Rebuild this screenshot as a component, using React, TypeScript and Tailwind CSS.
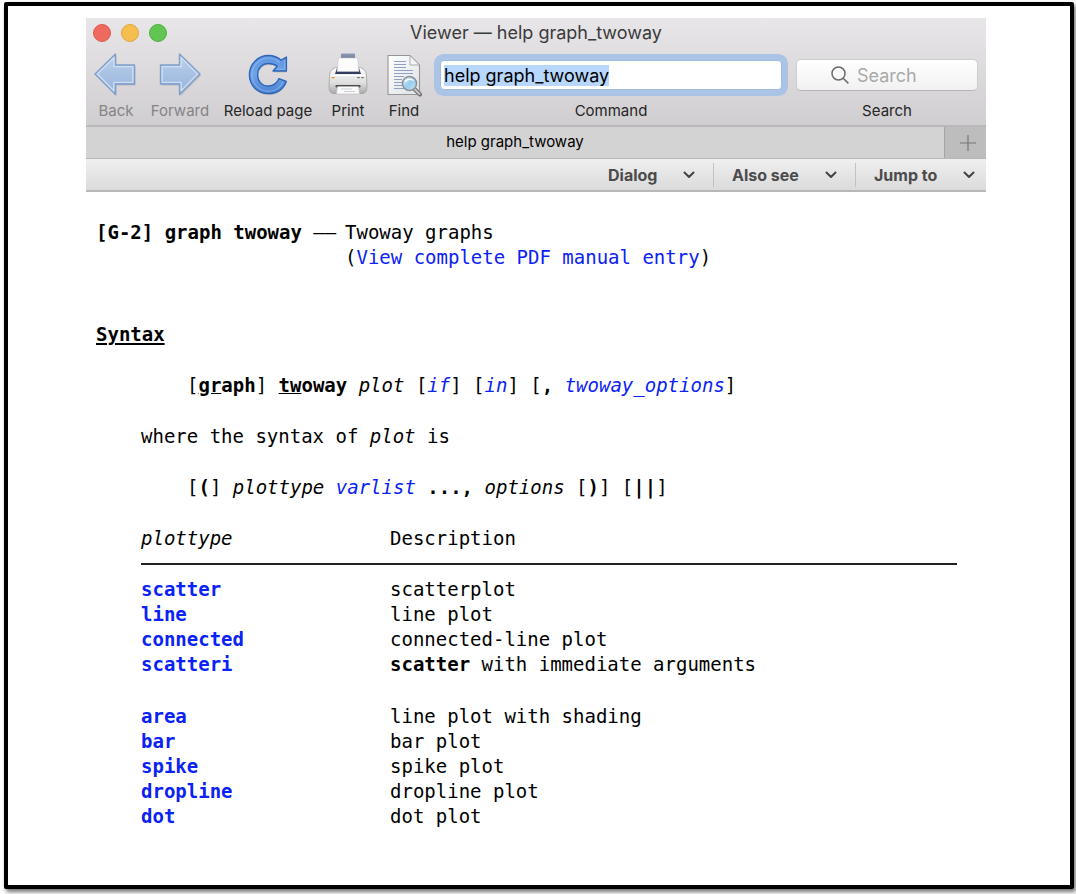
import { useEffect, useRef, type ReactNode } from "react";

function ArrowIcon({ forward = false }: { forward?: boolean }) {
  const d = forward
    ? "M1.5 12.5H20.5V1.5L41 21.5L20.5 42V31.5H1.5Z"
    : "M42.5 12.5H23.5V1.5L3 21.5L23.5 42V31.5H42.5Z";
  const inner = forward
    ? "M3.2 14.2H22.2V5.2L38.6 21.5L22.2 38.2V29.8H3.2Z"
    : "M40.8 14.2H21.8V5.2L5.4 21.5L21.8 38.2V29.8H40.8Z";
  const id = forward ? "arrow-forward" : "arrow-back";
  return (
    <svg width="44" height="44" viewBox="0 0 44 44" aria-hidden="true">
      <defs>
        <linearGradient id={id} x1="0" y1="0" x2="0" y2="1">
          <stop offset="0" stopColor="#bdd1ea" />
          <stop offset="1" stopColor="#95b3dc" />
        </linearGradient>
      </defs>
      <g transform={forward ? "translate(1 -0.5)" : "translate(-2 -0.5)"}>
        <path d={d} transform="translate(1 1.5)" fill="#00000022" />
        <path d={d} fill={`url(#${id})`} stroke="#7f9fcd" strokeWidth="1.4" strokeLinejoin="round" />
        <path d={inner} fill="none" stroke="#cfdef1" strokeWidth="1.3" strokeLinejoin="round" />
      </g>
    </svg>
  );
}

function ReloadIcon() {
  const d =
    "M33.2 7.2L38.4 4V18H25L29.2 13.2C26.8 11.2 23.7 10.5 20.5 10.5C14 10.5 9.6 15.2 9.6 21.8C9.6 28.4 14 33 20.5 33C25.3 33 29 30.4 31 25.6L38.3 28.4C35.2 36.2 28.5 40.6 20.5 40.6C9.6 40.6 1.4 32.4 1.4 21.8C1.4 11.2 9.8 2.5 20.5 2.5C25.5 2.5 29.8 4.2 33.2 7.2Z";
  return (
    <svg width="40" height="44" viewBox="0 0 40 44" aria-hidden="true">
      <defs>
        <linearGradient id="reload" x1="0" y1="0" x2="0" y2="1">
          <stop offset="0" stopColor="#5f96df" />
          <stop offset="0.5" stopColor="#6ea3e6" />
          <stop offset="1" stopColor="#4a82d2" />
        </linearGradient>
      </defs>
      <path d={d} transform="translate(0.5 1.4)" fill="#00000022" />
      <path d={d} fill="url(#reload)" stroke="#2f66ba" strokeWidth="1.4" strokeLinejoin="round" />
      <path
        d="M31.5 9.5C28.5 6.5 25 5 20.5 5C11.8 5 4 12.4 4 21.8C4 31.2 11.8 38.2 20.5 38.2C27 38.2 32 35 35 29.5M36.8 7V16.3H28.5"
        fill="none"
        stroke="#9cc2f2"
        strokeWidth="1.1"
        opacity="0.6"
      />
    </svg>
  );
}

function PrinterIcon() {
  return (
    <svg width="40" height="44" viewBox="0 0 40 44" aria-hidden="true">
      <defs>
        <linearGradient id="printer" x1="0" y1="0" x2="0" y2="1">
          <stop offset="0" stopColor="#fdfdfd" />
          <stop offset="0.6" stopColor="#dedede" />
          <stop offset="1" stopColor="#a9a9a9" />
        </linearGradient>
        <linearGradient id="feed" x1="0" y1="0" x2="0" y2="1">
          <stop offset="0" stopColor="#8f9bb6" />
          <stop offset="1" stopColor="#6c7693" />
        </linearGradient>
      </defs>
      <path d="M13 0.5H27V7H13Z" fill="url(#feed)" />
      <path d="M5 16C3 17 2 19 1.6 22L1 33C1 38 2.5 40.5 6 40.5H34C37.5 40.5 39 38 39 33L38.4 22C38 19 37 17 35 16L32.5 14.5H7.5Z" fill="url(#printer)" stroke="#9a9a9a" strokeWidth="0.7" />
      <path d="M9 15H31L33 21H7Z" fill="#343d5c" />
      <path d="M10.5 5H29.5L31 18.5H9Z" fill="#fcfcfd" stroke="#c5c7cc" strokeWidth="0.6" />
      <path d="M3 22.5H37" stroke="#fff" strokeWidth="1" />
      <rect x="3.5" y="24" width="3" height="1.3" fill="#f08a32" />
      <rect x="29" y="24" width="3" height="1.2" rx="0.6" fill="#777" />
      <rect x="33" y="24" width="3" height="1.2" rx="0.6" fill="#777" />
      <rect x="7.5" y="32" width="25" height="2.4" rx="1.2" fill="#4a4a4a" />
      <path d="M9.5 33.5H30.5L31.5 41H8.5Z" fill="#fafafa" stroke="#bdbdbd" strokeWidth="0.6" />
      <path d="M13 36H24M16 38.5H27" stroke="#bfc4cf" strokeWidth="0.8" />
    </svg>
  );
}

function FindIcon() {
  return (
    <svg width="36" height="44" viewBox="0 0 36 44" aria-hidden="true">
      <defs>
        <linearGradient id="lens" x1="0" y1="0" x2="1" y2="1">
          <stop offset="0" stopColor="#e9f6fd" />
          <stop offset="0.5" stopColor="#96cdee" />
          <stop offset="1" stopColor="#c7e9fa" />
        </linearGradient>
        <linearGradient id="sheet" x1="0" y1="0" x2="1" y2="1">
          <stop offset="0" stopColor="#ffffff" />
          <stop offset="1" stopColor="#dfe1e6" />
        </linearGradient>
      </defs>
      <path d="M2 2.5H24L33.5 12V41.5H2Z" fill="url(#sheet)" stroke="#969696" strokeWidth="1.1" />
      <path d="M24 2.5V12H33.5Z" fill="#f4f4f6" stroke="#a4a4a4" strokeWidth="0.9" />
      <path
        d="M8 8.5H20M8 11.5H20M8 14.5H20M8 17.5H27M8 20.5H27M8 23.5H18M8 26.5H16M8 29.5H16M8 32.5H17M8 35.5H20"
        stroke="#8fa0c2"
        strokeWidth="1.2"
      />
      <path d="M28.5 36L34 41.5" stroke="#707070" strokeWidth="4" strokeLinecap="round" />
      <path d="M28.5 36L33.5 41" stroke="#c9c9c9" strokeWidth="1.8" strokeLinecap="round" />
      <circle cx="23.5" cy="30.5" r="7" fill="url(#lens)" stroke="#8d9298" strokeWidth="1.6" />
      <path d="M19 29C20.5 26 24.5 25.5 27.5 27.5" stroke="#fff" strokeWidth="1.3" fill="none" />
    </svg>
  );
}

function Chevron() {
  return (
    <svg width="12" height="8" viewBox="0 0 12 8" aria-hidden="true" fill="none" stroke="#444" strokeWidth="2">
      <path d="M1.5 1.5L6 6L10.5 1.5" strokeLinecap="round" strokeLinejoin="round" />
    </svg>
  );
}

function ToolButton({ label, width, disabled, children }: { label: string; width: string; disabled?: boolean; children: ReactNode }) {
  return (
    <button
      type="button"
      disabled={disabled}
      className={`${width} flex shrink-0 flex-col items-center whitespace-nowrap text-[#262626] disabled:text-[#858487]`}
    >
      <span className="flex h-11 items-center">{children}</span>
      <span className="leading-7">{label}</span>
    </button>
  );
}

function MenuButton({ label, width }: { label: string; width: string }) {
  return (
    <button type="button" className={`${width} flex h-6 items-center justify-between pr-[18px] pl-[18px] last:pr-[11px]`}>
      {label}
      <Chevron />
    </button>
  );
}

function Doc({ children }: { children: ReactNode }) {
  return <a href="#" className="text-[#0a22f5]">{children}</a>;
}

type Row = { name: string; text: ReactNode };

const points: Row[] = [
  { name: "scatter", text: "scatterplot" },
  { name: "line", text: "line plot" },
  { name: "connected", text: "connected-line plot" },
  { name: "scatteri", text: <><b>scatter</b> with immediate arguments</> },
];

const shapes: Row[] = [
  { name: "area", text: "line plot with shading" },
  { name: "bar", text: "bar plot" },
  { name: "spike", text: "spike plot" },
  { name: "dropline", text: "dropline plot" },
  { name: "dot", text: "dot plot" },
];

function Rows({ rows, gap }: { rows: Row[]; gap: string }) {
  return (
    <tbody className={`${gap} before:block`}>
      {rows.map((row) => (
        <tr key={row.name}>
          <th scope="row" className="p-0 text-left font-bold"><Doc>{row.name}</Doc></th>
          <td className="p-0">{row.text}</td>
        </tr>
      ))}
    </tbody>
  );
}

export default function App() {
  const command = useRef<HTMLInputElement>(null);
  useEffect(() => {
    command.current?.focus();
    command.current?.select();
  }, []);

  return (
    <div className="bg-white pt-0.5 pr-0.5 pb-1.5 pl-1">
      <div className="rounded-[2px] border-4 border-black bg-white pt-3 pr-[84px] pb-14 pl-[78px] shadow-[2px_3px_4px_rgba(0,0,0,0.55)]">
        <header className="font-['Inter',sans-serif]">
          <div className="border-b-2 border-[#bab9ba] bg-linear-to-b from-[#e8e6e8] to-[#d0ced0] text-[15px]">
            <div className="grid h-[35px] grid-cols-[1fr_auto_1fr] items-center px-[7px] pb-[6px]">
              <div className="flex gap-[10px]">
                <button type="button" aria-label="Close" className="size-[18px] rounded-full border border-[#dc5a50] bg-[#ee6a5f]" />
                <button type="button" aria-label="Minimize" className="size-[18px] rounded-full border border-[#e0a63c] bg-[#f5bf4f]" />
                <button type="button" aria-label="Zoom" className="size-[18px] rounded-full border border-[#52ae41] bg-[#61c554]" />
              </div>
              <h1 className="text-[18px] text-[#3b3a3b]">Viewer — help graph_twoway</h1>
            </div>
            <div className="flex gap-3 px-2">
              <ToolButton label="Back" width="w-11" disabled><ArrowIcon /></ToolButton>
              <ToolButton label="Forward" width="w-[60px]" disabled><ArrowIcon forward /></ToolButton>
              <ToolButton label="Reload page" width="w-[92px]"><ReloadIcon /></ToolButton>
              <ToolButton label="Print" width="w-11"><PrinterIcon /></ToolButton>
              <ToolButton label="Find" width="w-11"><FindIcon /></ToolButton>
              <div className="flex min-w-0 flex-1 flex-col px-0.5 text-center">
                <div className="flex h-11 items-center">
                  <input
                    id="command"
                    ref={command}
                    defaultValue="help graph_twoway"
                    className="h-[30px] w-full rounded-[4px] border border-[#9fbde3] bg-white px-[3px] text-[18px] text-black ring-[6px] ring-[#abc4e6] outline-none selection:bg-[#b8d7fd] selection:text-black"
                  />
                </div>
                <label htmlFor="command" className="leading-7 text-[#262626]">Command</label>
              </div>
              <div className="flex w-[182px] shrink-0 flex-col text-center">
                <div className="flex h-11 items-center">
                  <div className="flex h-8 w-full items-center gap-2 rounded-[5px] border border-[#cfcdcf] border-b-[#b5b4b5] bg-linear-to-b from-white to-[#f1f1f1] pl-[34px]">
                    <svg width="18" height="18" viewBox="0 0 18 18" fill="none" stroke="#6b6b6b" strokeWidth="1.5" aria-hidden="true">
                      <circle cx="7.5" cy="7.5" r="6.5" />
                      <path d="M12.2 12.2L17.4 17.4" />
                    </svg>
                    <input id="search" placeholder="Search" className="w-24 min-w-0 bg-transparent text-[18px] outline-none placeholder:text-[#a9a9a9]" />
                  </div>
                </div>
                <label htmlFor="search" className="leading-7 text-[#262626]">Search</label>
              </div>
            </div>
          </div>
          <div className="flex h-8 border-b border-[#b7b7b7] bg-[#d3d3d3] text-[15px]">
            <button type="button" className="flex-1 text-black">help graph_twoway</button>
            <button type="button" aria-label="New tab" className="flex w-[42px] items-center justify-center border-l border-[#a5a5a5] bg-[#bdbdbd] pl-1">
              <svg width="16" height="16" viewBox="0 0 16 16" stroke="#777" strokeWidth="1.2" aria-hidden="true">
                <path d="M8 0V16M0 8H16" />
              </svg>
            </button>
          </div>
          <nav className="flex h-[33px] items-center justify-end divide-x divide-[#c2c2c2] border-b-2 border-[#b8b8b8] bg-linear-to-b from-[#efefef] to-[#dbdbdb] text-base font-bold text-[#4b4b4b]">
            <MenuButton label="Dialog" width="w-[124px]" />
            <MenuButton label="Also see" width="w-[142px]" />
            <MenuButton label="Jump to" width="w-[130px]" />
          </nav>
        </header>

        <main className="pt-7 pr-[29px] pl-[10px] font-['DejaVu_Sans_Mono',monospace] text-[19px] leading-[25px] text-black">
          <div className="grid grid-cols-[249px_1fr]">
            <div className="whitespace-nowrap"><b>[G-2] graph twoway</b> ——</div>
            <div>
              <p>Twoway graphs</p>
              <p>(<Doc>View complete PDF manual entry</Doc>)</p>
            </div>
          </div>

          <h2 className="mt-[52px] font-bold underline decoration-2 underline-offset-2">Syntax</h2>
          <p className="mt-[26px] pl-[91px] whitespace-nowrap">
            [<b><u>gr</u>aph</b>] <b><u>tw</u>oway</b> <i>plot</i> [<i><Doc>if</Doc></i>] [<i><Doc>in</Doc></i>] [<b>,</b> <i><Doc>twoway_options</Doc></i>]
          </p>
          <div className="pl-[45px]">
            <p className="mt-[26px]">where the syntax of <i>plot</i> is</p>
            <p className="mt-[26px] pl-[46px] whitespace-nowrap">
              [<b>(</b>] <i>plottype</i> <i><Doc>varlist</Doc></i> <b>...,</b> <i>options</i> [<b>)</b>] [<b>||</b>]
            </p>
            <table className="mt-[26px] w-full table-fixed border-collapse">
              <thead>
                <tr className="border-b-2 border-[#222]">
                  <th scope="col" className="w-[249px] p-0 pb-3 text-left font-normal italic">plottype</th>
                  <th scope="col" className="p-0 pb-3 text-left font-normal">Description</th>
                </tr>
              </thead>
              <Rows rows={points} gap="before:h-3" />
              <Rows rows={shapes} gap="before:h-[27px]" />
            </table>
          </div>
        </main>
      </div>
    </div>
  );
}
